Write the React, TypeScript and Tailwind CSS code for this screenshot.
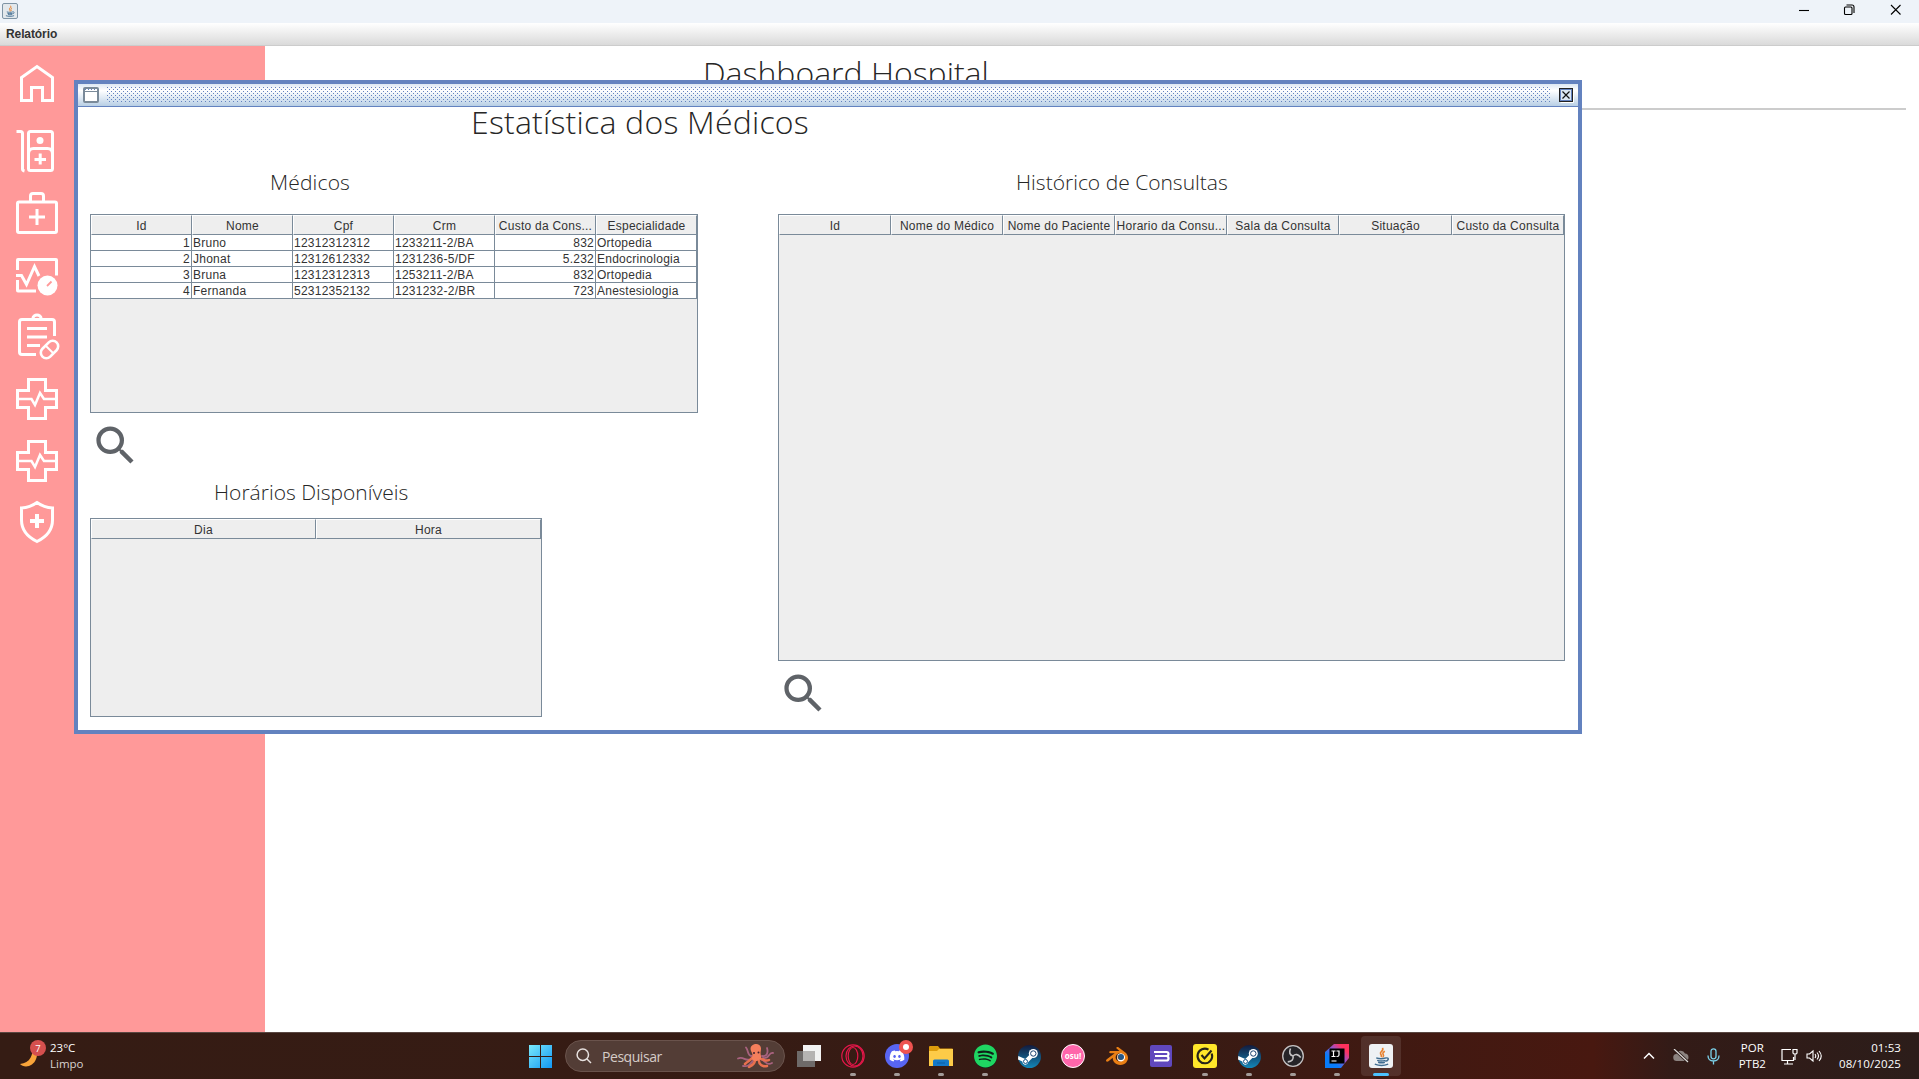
import React from "react";
import { MdSearch } from "react-icons/md";
import { FaDiscord, FaSpotify, FaSteam } from "react-icons/fa";
import { SiBlender } from "react-icons/si";

type Column = { label: string; width: string; align?: "right" };

const doctorColumns: Column[] = [
  { label: "Id", width: "w-[101px]", align: "right" },
  { label: "Nome", width: "w-[101px]" },
  { label: "Cpf", width: "w-[101px]" },
  { label: "Crm", width: "w-[101px]" },
  { label: "Custo da Cons...", width: "w-[101px]", align: "right" },
  { label: "Especialidade", width: "w-[101px]" },
];
const doctors = [
  ["1", "Bruno", "12312312312", "1233211-2/BA", "832", "Ortopedia"],
  ["2", "Jhonat", "12312612332", "1231236-5/DF", "5.232", "Endocrinologia"],
  ["3", "Bruna", "12312312313", "1253211-2/BA", "832", "Ortopedia"],
  ["4", "Fernanda", "52312352132", "1231232-2/BR", "723", "Anestesiologia"],
];
const historyColumns: Column[] = [
  { label: "Id", width: "w-[112px]" },
  { label: "Nome do Médico", width: "w-[112px]" },
  { label: "Nome do Paciente", width: "w-[112px]" },
  { label: "Horario da Consu...", width: "w-[112px]" },
  { label: "Sala da Consulta", width: "w-[112px]" },
  { label: "Situação", width: "w-[113px]" },
  { label: "Custo da Consulta", width: "w-[112px]" },
];
const hourColumns: Column[] = [
  { label: "Dia", width: "w-[225px]" },
  { label: "Hora", width: "w-[225px]" },
];

function Table({ columns, rows = [], size }: { columns: Column[]; rows?: string[][]; size: string }) {
  return (
    <div className={`${size} shrink-0 border border-[#7a8a99] bg-[#eeeeee] font-['Liberation_Sans',sans-serif] text-[12px] tracking-[0.25px] text-[#333333]`}>
      <div className="flex h-5">
        {columns.map((c) => (
          <div key={c.label} className={`${c.width} flex shrink-0 items-center justify-center overflow-hidden whitespace-nowrap border-b border-l border-r border-t border-b-[#7a8a99] border-l-white border-r-[#7a8a99] border-t-white pt-[2px] leading-[14px]`}>
            {c.label}
          </div>
        ))}
      </div>
      {rows.map((r) => (
        <div key={r[0]} className="flex h-4 bg-white">
          {r.map((v, i) => (
            <div key={i} className={`${columns[i].width} shrink-0 whitespace-nowrap border-b border-r border-[#7a8a99] px-px pt-px leading-[15px] ${columns[i].align === "right" ? "text-right" : ""}`}>
              {v}
            </div>
          ))}
        </div>
      ))}
    </div>
  );
}

function SideIcon({ y, h, children }: { y: number; h: number; children: React.ReactNode }) {
  return (
    <svg className="block shrink-0" width="74" height={h} viewBox={`0 ${y} 74 ${h}`} fill="none" stroke="white" strokeWidth="3">
      {children}
    </svg>
  );
}

function Cross({ y }: { y: number }) {
  return (
    <SideIcon y={y} h={62}>
      <g transform={`translate(0 ${y - 370})`}>
        <path d="M28.5 379.5h17v11h11v17h-11v11h-17v-11h-11v-17h11z" />
        <path d="M18 399h13.5l3.500 6 5-12 4 6H56" strokeWidth="2.500" />
      </g>
    </SideIcon>
  );
}

function Sidebar() {
  return (
    <aside className="flex w-[265px] shrink-0 flex-col bg-[#ff9999]">
      <SideIcon y={46} h={74}>
        <path d="M21.500 100.500V77.500L37 66.500l15.500 11v23H42.500V87.500H31.500v13z" />
      </SideIcon>
      <SideIcon y={120} h={65}>
        <path d="M16.500 131.500h4q2 0 2 2V169q0 1.500 2 2" />
        <rect x="28.500" y="131.500" width="24" height="39" rx="2" />
        <path d="M28.500 154q0-5.500 5-5.500h14q5 0 5 5.500M40.200 153.500v11M34.500 159.500H46" />
        <circle cx="40" cy="140.500" r="3.500" fill="white" stroke="none" />
      </SideIcon>
      <SideIcon y={185} h={65}>
        <rect x="17.500" y="202" width="39" height="30.500" rx="1.500" />
        <path d="M30.500 202v-6q0-2.500 2.500-2.500h8q2.500 0 2.500 2.500v6M37 209v16M29 217h16" />
      </SideIcon>
      <SideIcon y={250} h={60}>
        <path d="M17.500 270v-10q0-.5.5-.5h38q.5 0 .5.500v15.500M16 275.500h5.500l5 9 8-18 4.500 9.500M17.500 280v10.500q0 .5.500.5H36" />
        <circle cx="47.500" cy="285.500" r="10" fill="white" stroke="none" />
        <path d="M47 286l4.500-4.500" stroke="#ff9999" strokeWidth="1.800" />
      </SideIcon>
      <SideIcon y={310} h={60}>
        <path d="M36 354.500H22q-2.500 0-2.500-2.500V322q0-2.500 2.500-2.500h30q2.500 0 2.500 2.500v14M31.500 319.500q1.500 0 1.500-1.500a4 3 0 0 1 8 0q0 1.500 1.500 1.500M27 328.500h20M27 337h20M27 345.500h13" />
        <rect x="-10" y="-5.500" width="20" height="11" rx="5.500" transform="translate(49.500 349.500) rotate(-45)" strokeWidth="2.600" />
        <path d="M45.500 345.500l8 8" strokeWidth="2" />
      </SideIcon>
      <Cross y={370} />
      <Cross y={432} />
      <SideIcon y={494} h={66}>
        <path d="M37 502.500q7 5 15.500 5.500v12q0 14-15.500 21.500Q21.500 534 21.500 520v-12q8.500-.5 15.500-5.500z" />
        <path d="M37 514v14M30 521h14" strokeWidth="4" />
      </SideIcon>
    </aside>
  );
}

function MedicosFrame() {
  return (
    <section className="absolute left-[74px] top-[80px] flex h-[654px] w-[1508px] flex-col border-4 border-[#6382bf] bg-white">
      <div className="flex h-[23px] shrink-0 items-center justify-between border-b border-[#6382bf] bg-[linear-gradient(#dde8f3,#ffffff_30%,#dde8f3_65%,#b8cfe5)] pl-[5px] pr-[4px]">
        <svg width="16" height="16" viewBox="0 0 16 16">
          <rect x="1" y="1" width="14" height="14" rx="1" fill="white" stroke="#7a8a99" strokeWidth="2" />
          <path d="M2 2.500h12" stroke="#6382bf" strokeDasharray="1 2" />
          <path d="M1 4.500h14" stroke="#7a8a99" />
        </svg>
        <div className="h-[16px] w-[1444px] bg-[conic-gradient(from_270deg_at_1px_1px,#6382bf_90deg,transparent_0),conic-gradient(from_270deg_at_1px_1px,#6382bf_90deg,transparent_0)] bg-[length:4px_4px] bg-[position:0_0,2px_2px]" />
        <svg width="15" height="15" viewBox="0 0 15 15">
          <path d="M1.500 14.500h13V1.500" stroke="white" fill="none" />
          <rect x=".5" y=".5" width="13" height="13" fill="#dde8f3" stroke="#222222" />
          <rect x="1.500" y="1.500" width="11" height="11" fill="none" stroke="#6382bf" />
          <path d="M3.500 3.500l7 7M10.500 3.500l-7 7" stroke="#111111" strokeWidth="1.200" />
        </svg>
      </div>
      <h2 className="h-[60px] shrink-0 whitespace-nowrap pl-[393px] font-['Open_Sans',sans-serif] text-[32px] font-light leading-[30px] tracking-[0.22px] text-[#262626]">Estatística dos Médicos</h2>
      <div className="flex gap-[80px] pl-[12px]">
        <div className="w-[608px]">
          <h3 className="h-[47px] whitespace-nowrap pl-[180px] font-['Open_Sans',sans-serif] text-[21px] font-light leading-[31px] tracking-[0.15px] text-[#262626]">Médicos</h3>
          <Table columns={doctorColumns} rows={doctors} size="h-[199px] w-[608px]" />
          <MdSearch className="mt-[7px] size-[51px] text-[#5f6368]" />
          <h3 className="h-[47px] whitespace-nowrap pl-[124px] pt-[6px] font-['Open_Sans',sans-serif] text-[21px] font-light leading-[31px] text-[#262626]">Horários Disponíveis</h3>
          <Table columns={hourColumns} size="h-[199px] w-[452px]" />
        </div>
        <div className="w-[787px]">
          <h3 className="h-[47px] whitespace-nowrap pl-[238px] font-['Open_Sans',sans-serif] text-[21px] font-light leading-[31px] text-[#262626]">Histórico de Consultas</h3>
          <Table columns={historyColumns} size="h-[447px] w-[787px]" />
          <MdSearch className="mt-[7px] size-[51px] text-[#5f6368]" />
        </div>
      </div>
    </section>
  );
}

function TaskButton({ children, run, active }: { children: React.ReactNode; run?: boolean; active?: boolean }) {
  return (
    <div className={`relative flex h-10 w-10 shrink-0 items-center justify-center rounded ${active ? "bg-white/10" : ""}`}>
      {children}
      {run && <span className="absolute bottom-0 h-[3px] w-[6px] rounded-full bg-[#a39b98]" />}
      {active && <span className="absolute bottom-0 h-[3px] w-4 rounded-full bg-[#4cc2ff]" />}
    </div>
  );
}

function Steam() {
  return (
    <svg width="23" height="23" viewBox="0 0 23 23">
      <defs>
        <linearGradient id="steam" x1="0" y1="0" x2="0" y2="1">
          <stop stopColor="#131a3c" />
          <stop offset="1" stopColor="#1387b8" />
        </linearGradient>
      </defs>
      <circle cx="11.500" cy="11.500" r="11.500" fill="url(#steam)" />
      <path d="M.3 11l7 3 5-5 3 3-5 5q-1 3.500-4 2.500-2-.8-2-3L0 14.500z" fill="white" />
      <circle cx="15.300" cy="8.500" r="4.500" fill="white" />
      <circle cx="15.300" cy="8.500" r="2.700" fill="none" stroke="#17406e" strokeWidth="1" />
      <circle cx="7.500" cy="16.500" r="2" fill="none" stroke="#17558a" strokeWidth="1" />
    </svg>
  );
}

function JavaCup({ className }: { className: string }) {
  return (
    <svg className={className} viewBox="0 0 24 24" fill="none">
      <path d="M13 3c2 3-3 4-2 6 .5 1.500 1.500 2 .5 3.500M15.500 6.500c-3 1.500-2 3-1.500 4 .5 1-.5 2-1 2" stroke="#e8812e" strokeWidth="1.700" />
      <path d="M6.500 13.500c3 1 7 1 10 0M7.500 16c2.500.8 6 .8 8.500 0M8.500 18c2 .7 5 .7 7 0M16.500 13.500c4-.5 3 3-.5 3.500M5 20c4 1.500 10 1.500 14 0" stroke="#3f6c90" strokeWidth="1.500" />
    </svg>
  );
}

function Taskbar() {
  return (
    <footer className="flex h-[47px] items-center border-t border-[#5a4742] bg-[linear-gradient(90deg,#351c14,#371b14_60%,#481810_83%,#331b17_87%,#2c1d1a)] font-['Open_Sans',sans-serif] text-white">
      <div className="flex w-[520px] items-center pl-[18px]">
        <svg width="32" height="34" viewBox="18 1038 32 34">
          <path d="M32 1043c8 6 6 19-3 22-4 1-7 0-9-2 10-1 14-9 12-20z" fill="#f9a43a" />
          <circle cx="38" cy="1047" r="8" fill="#d5504e" />
          <text x="38" y="1050.500" fontSize="9.500" fill="white" textAnchor="middle" fontFamily="Open Sans">7</text>
        </svg>
        <div className="text-[11.500px] leading-[16px]">
          <div>23°C</div>
          <div className="text-[#d9d2d0]">Limpo</div>
        </div>
      </div>
      <TaskButton>
        <svg width="23" height="23" viewBox="0 0 23 23">
          <defs>
            <linearGradient id="win" x1="0" y1="0" x2="23" y2="23" gradientUnits="userSpaceOnUse">
              <stop stopColor="#7ae9fb" /><stop offset="1" stopColor="#1197f5" />
            </linearGradient>
          </defs>
          <path d="M0 0h11v11H0zM12 0h11v11H12zM0 12h11v11H0zM12 12h11v11H12z" fill="url(#win)" />
        </svg>
      </TaskButton>
      <div className="ml-[5px] flex h-8 w-[220px] shrink-0 items-center rounded-full border border-[#6a534c] bg-[#533d36] pl-[10px] pr-2">
        <svg width="16" height="16" viewBox="0 0 16 16" fill="none" stroke="#e8e2e0" strokeWidth="1.500">
          <circle cx="6.800" cy="6.800" r="5.700" /><path d="M11 11l4 4" />
        </svg>
        <span className="ml-[10px] flex-1 text-[14px] tracking-[-0.45px] text-[#d6ccc8]">Pesquisar</span>
        <svg width="39" height="26" viewBox="0 0 39 26" fill="none" strokeLinecap="round">
          <g stroke="#a8627f" strokeWidth="1.800">
            <path d="M15 13C10 13 12 8 9 4.500M25 13c6 1 6-5 5-8M14 16C8 19 7 13 1 15.500M26 15c7 1 5-6 10-5" />
            <path d="M16 18c-3 3-4 6-10 5M25 17c4 1 4 6 10 3" />
          </g>
          <path d="M15 15c-2 3-4 3-7 6M18 18c-1 4-4 5-6 6M22 18c0 3 3 6 8 5M24 16c3 0 4 3 8 1" stroke="#e8704e" strokeWidth="2.500" />
          <path d="M14 8c-3-7 9-10 10-3 0 4-1 4 0 8 2 6-11 7-9 1 1-3 0-4-1-6z" fill="#f47f5c" />
          <circle cx="17" cy="10" r="1" fill="#402030" /><circle cx="21.500" cy="9.500" r="1" fill="#402030" />
        </svg>
      </div>
      <div className="ml-1 flex gap-1">
        <TaskButton>
          <svg width="24" height="22" viewBox="0 0 24 22">
            <path d="M6 0h18v16H6z" fill="#f2f2f2" /><path d="M0 6h18v16H0z" fill="#6e6a69" /><path d="M6 6h12v10H6z" fill="#b5b3b2" />
          </svg>
        </TaskButton>
        <TaskButton run>
          <svg width="24" height="24" viewBox="0 0 24 24" fill="none" stroke="#e5174a" strokeWidth="1.200">
            <circle cx="12" cy="12" r="11.200" /><ellipse cx="12" cy="12" rx="4.800" ry="8.500" /><ellipse cx="13.500" cy="12" rx="8.500" ry="10" />
          </svg>
        </TaskButton>
        <TaskButton run>
          <span className="flex size-6 items-center justify-center rounded-full bg-[#5865f2]"><FaDiscord className="size-4 text-white" /></span>
          <span className="absolute right-[4px] top-[4px] flex size-[14px] items-center justify-center rounded-full bg-[#ef5350]"><span className="size-[6px] rounded-full bg-white" /></span>
        </TaskButton>
        <TaskButton run>
          <svg width="24" height="22" viewBox="0 0 24 22">
            <path d="M0 2q0-1 1-1h8l2 2.500h12q1 0 1 1V8H0z" fill="#dd9c0c" /><path d="M0 6h8l2-2h14v17H0z" fill="#fdcb48" />
            <path d="M4 21v-5q0-1.500 1.500-1.500h13q1.500 0 1.500 1.500v5z" fill="#1479c9" /><path d="M8 18h8" stroke="#0b5ea5" />
          </svg>
        </TaskButton>
        <TaskButton run>
          <span className="flex size-[23px] items-center justify-center rounded-full bg-[#10201a]"><FaSpotify className="size-6 text-[#1fd662]" /></span>
        </TaskButton>
        <TaskButton><Steam /></TaskButton>
        <TaskButton>
          <span className="flex size-6 items-center justify-center rounded-full border border-white bg-[#ff66ab] text-[8px] font-bold leading-none text-white">osu!</span>
        </TaskButton>
        <TaskButton>
          <span className="relative flex items-center justify-center">
            <span className="absolute left-[11px] top-[8px] size-[9px] rounded-full bg-white" />
            <SiBlender className="relative size-[22px] text-[#ea7f14]" />
            <span className="absolute left-[12px] top-[9px] size-[6px] rounded-full bg-[#265787]" />
          </span>
        </TaskButton>
        <TaskButton>
          <svg width="22" height="22" viewBox="0 0 22 22">
            <rect width="22" height="22" rx="2" fill="#6048bd" /><path d="M4 7h12.500q2 0 2 2t-2 2H5M16 11q2.500 0 2.500 2.200T16.500 15.500H4" fill="none" stroke="white" strokeWidth="2.200" />
          </svg>
        </TaskButton>
        <TaskButton run>
          <svg width="24" height="24" viewBox="0 0 24 24" fill="none" stroke="#25231a" strokeWidth="2.100">
            <rect width="24" height="24" rx="3" fill="#ffe72a" stroke="none" /><path d="M18.700 9.500A7.300 7.300 0 1 1 15.500 5.700M8.500 11l3 3.500L18.500 6.500" />
          </svg>
        </TaskButton>
        <TaskButton run><Steam /></TaskButton>
        <TaskButton run>
          <svg width="22" height="22" viewBox="0 0 22 22" fill="none" stroke="#c4c2c3">
            <circle cx="11" cy="11" r="10.300" fill="#262428" strokeWidth="1.300" />
            <g strokeWidth="1.600">
              <path d="M8.500 3.500q-2.500 6 2.500 7.500" />
              <path d="M8.500 3.500q-2.500 6 2.500 7.500" transform="rotate(120 11 11)" />
              <path d="M8.500 3.500q-2.500 6 2.500 7.500" transform="rotate(240 11 11)" />
            </g>
          </svg>
        </TaskButton>
        <TaskButton run>
          <svg width="24" height="24" viewBox="0 0 24 24">
            <defs>
              <linearGradient id="ij" x1="0" y1="24" x2="24" y2="0" gradientUnits="userSpaceOnUse">
                <stop offset=".3" stopColor="#087cfa" /><stop offset=".6" stopColor="#a34fbf" /><stop offset=".8" stopColor="#fe315d" />
              </linearGradient>
            </defs>
            <path d="M0 8L9 0h15v14l-8 10H0z" fill="url(#ij)" /><rect x="4.500" y="4.500" width="15" height="15" fill="black" />
            <path d="M6.500 7h4M8.500 7v5.500M6.500 12.500h4M11.500 7H14v4q0 1.500-2 1.500h-.5M6.500 17h5" stroke="white" strokeWidth="1.200" fill="none" />
          </svg>
        </TaskButton>
        <TaskButton active>
          <span className="flex size-6 items-center justify-center rounded-[3px] bg-[#eef1f4]"><JavaCup className="size-[23px]" /></span>
        </TaskButton>
      </div>
      <div className="flex flex-1 items-center justify-end pr-[18px] text-[11.500px] leading-[16px]">
        <svg className="mr-[18px]" width="12" height="8" viewBox="0 0 12 8" fill="none" stroke="white" strokeWidth="1.500"><path d="M1 6.500l5-5 5 5" /></svg>
        <svg className="mr-[18px]" width="16" height="14" viewBox="0 0 16 14"><path d="M4 12a3.500 3.500 0 0 1-.5-7A4.500 4.500 0 0 1 12 4.500 3.800 3.800 0 0 1 12.500 12z" fill="#8c8380" /><path d="M1 0l14 13" stroke="#2b1b18" strokeWidth="3" /><path d="M1 0l14 13" stroke="#e0dcda" strokeWidth="1.200" /></svg>
        <svg className="mr-[19px]" width="13" height="17" viewBox="0 0 13 17" fill="none" stroke="#7bd0e8" strokeWidth="1.300"><rect x="4" y=".8" width="5" height="10" rx="2.500" /><path d="M1 7.500q0 5.500 5.500 5.500T12 7.500M6.500 13v3.500" /></svg>
        <div className="mr-[15px] text-center"><div>POR</div><div>PTB2</div></div>
        <svg className="mr-[8px]" width="17" height="17" viewBox="0 0 17 17" fill="none" stroke="white" strokeWidth="1.200"><path d="M10 1.500H1v11h11.500V9M6.500 12.500v3M3 16h9M12 1.500h4v3.500q0 1-2 1t-2-1zM14 6v6" /></svg>
        <svg className="mr-[16px]" width="17" height="14" viewBox="0 0 17 14" fill="none" stroke="white" strokeWidth="1.100"><path d="M1 5h2.500L7 2v10L3.500 9H1zM9 5q1.500 2 0 4M11 3.500q3 3.500 0 7M13 2q4.500 5 0 10" /></svg>
        <div className="text-right tracking-[0.1px]"><div>01:53</div><div>08/10/2025</div></div>
      </div>
    </footer>
  );
}

export default function App() {
  return (
    <div className="relative flex h-[1079px] w-[1919px] flex-col overflow-hidden bg-white">
      <header className="flex h-[23px] shrink-0 justify-between bg-[#eef3f9] pl-[2px] pr-[17px]">
        <span className="mt-[3px] flex size-4 items-center justify-center rounded-[2px] border border-[#7f94a5] bg-[#e3e8ec]"><JavaCup className="size-[14px]" /></span>
        <svg className="mt-[4px]" width="103" height="12" viewBox="0 0 103 12" fill="none" stroke="black" strokeWidth="1.100">
          <path d="M0 6.500h10" />
          <rect x="45.500" y="3" width="7.500" height="7.500" rx="1" /><path d="M47.500 1h5.500q2 0 2 2v6" />
          <path d="M92 1l9.500 9.500M101.500 1L92 10.500" />
        </svg>
      </header>
      <nav className="h-[23px] shrink-0 border-b border-[#cccccc] bg-[linear-gradient(#ffffff,#dadada)] pl-[6px] font-['Liberation_Sans',sans-serif] text-[12px] font-bold leading-[22px] tracking-[-0.1px] text-[#333333]">Relatório</nav>
      <div className="flex min-h-0 flex-1">
        <Sidebar />
        <main className="flex-1 pr-[13px]">
          <h1 className="h-[64px] whitespace-nowrap border-b-2 border-[#cccccc] pl-[438px] pt-[11px] font-['Open_Sans',sans-serif] text-[32px] font-light leading-[32px] text-[#262626]">Dashboard Hospital</h1>
        </main>
      </div>
      <Taskbar />
      <MedicosFrame />
    </div>
  );
}
